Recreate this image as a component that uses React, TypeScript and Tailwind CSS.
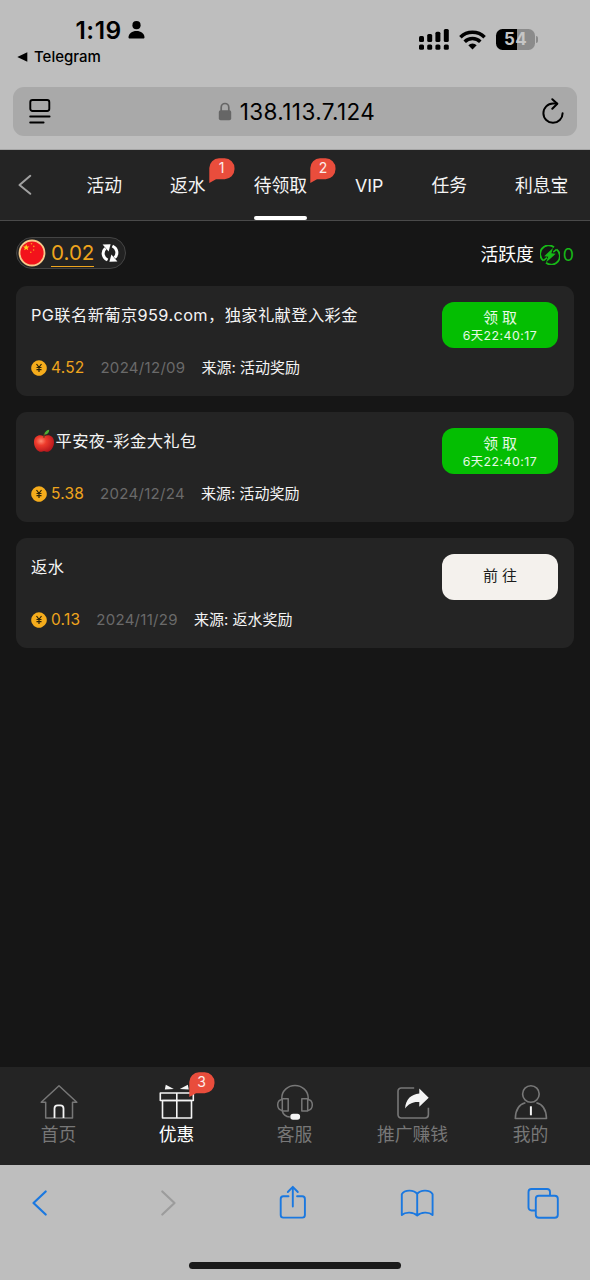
import React from 'react';

// Custom SVG Icons
const Icons = {
    Person: () => (
        <svg className="h-[18px] w-[17px]" viewBox="0 0 17 18" fill="currentColor">
            <circle cx="8.5" cy="4.2" r="4.1" />
            <path d="M0.5 16.2c0-3.6 3.6-6.2 8-6.2s8 2.6 8 6.2c0 .9-.5 1.3-1.3 1.3H1.8c-.8 0-1.3-.4-1.3-1.3z" />
        </svg>
    ),

    Signal: () => (
        <svg className="h-[21px] w-[30px]" viewBox="0 0 30 21" fill="currentColor">
            <rect x="0" y="7" width="5" height="6" rx="1.5" />
            <rect x="8.2" y="5" width="5" height="8" rx="1.5" />
            <rect x="16.4" y="2.8" width="5" height="10.2" rx="1.5" />
            <rect x="24.8" y="0" width="5" height="13" rx="1.5" />
            <rect x="0" y="15.5" width="5" height="5.3" rx="1.5" />
            <rect x="8.2" y="15.5" width="5" height="5.3" rx="1.5" />
            <rect x="16.4" y="15.5" width="5" height="5.3" rx="1.5" />
            <rect x="24.8" y="15.5" width="5" height="5.3" rx="1.5" />
        </svg>
    ),

    Wifi: () => (
        <svg className="h-[20px] w-[27px]" viewBox="0 0 27 20" fill="none" stroke="currentColor" strokeWidth={3.5}>
            <path d="M1.4 7.3a17.2 17.2 0 0124.2 0" />
            <path d="M5.7 11.8a11 11 0 0115.6 0" />
            <path d="M13.5 19.6L9.3 15.3a6 6 0 018.4 0z" fill="currentColor" stroke="none" />
        </svg>
    ),

    Reader: () => (
        <svg className="h-[27px] w-[22px]" viewBox="0 0 22 27" fill="none" stroke="currentColor" strokeWidth={1.9} strokeLinecap="round">
            <rect x="1.3" y="2" width="19" height="11" rx="2.2" />
            <path d="M1.2 18.5h19.4M1.2 24.5h13.4" />
        </svg>
    ),

    Lock: () => (
        <svg className="h-[19px] w-[14px]" viewBox="0 0 14 19">
            <path d="M3.2 9V5.4a3.8 3.9 0 017.6 0V9" fill="none" stroke="#666" strokeWidth={1.7} />
            <rect x="0.8" y="8.3" width="12.4" height="10" rx="1.8" fill="#666" />
        </svg>
    ),

    Reload: () => (
        <svg className="h-[27px] w-[22px]" viewBox="0 0 22 27" fill="none" stroke="currentColor" strokeWidth={2} strokeLinecap="round" strokeLinejoin="round">
            <path d="M20.6 15.2a9.6 9.6 0 11-9.6-9.6h3.8" />
            <path d="M10.3 1.2l5 4.6-5 5" />
        </svg>
    ),

    Back: () => (
        <svg className="h-[22px] w-[14px]" viewBox="0 0 14 22" fill="none" stroke="#a0a0a0" strokeWidth={2} strokeLinecap="round" strokeLinejoin="round">
            <path d="M12.3 1.8L1.5 11l10.8 8.8" />
        </svg>
    ),

    Flag: () => (
        <svg className="h-[28px] w-[28px]" viewBox="0 0 28 28">
            <circle cx="14" cy="14" r="12.5" fill="#f3121b" stroke="#f8c98a" strokeWidth={1.8} />
            <path d="M8.2 5.2l.9 2.2 2.3.1-1.8 1.5.6 2.3-2-1.3-2 1.3.6-2.3L5 7.5l2.3-.1z" fill="#ffd21c" />
            <g fill="#ff9a1c">
                <circle cx="13.5" cy="4.8" r=".8" />
                <circle cx="15.8" cy="7.4" r=".8" />
                <circle cx="15.6" cy="11" r=".8" />
                <circle cx="12.8" cy="13.3" r=".8" />
            </g>
        </svg>
    ),

    Refresh: () => (
        <svg className="h-[20px] w-[18px]" viewBox="0 0 18 20" fill="none" stroke="#fff" strokeWidth={3}>
            <path d="M6.6 17C1.8 14.8.6 9 4.4 5.2" />
            <path d="M11.4 3c4.8 2.2 6 8 2.2 11.8" />
            <path d="M1.6 1.6l8-.4-2 7.2z" fill="#fff" stroke="none" />
            <path d="M16.4 18.4l-8 .4 2-7.2z" fill="#fff" stroke="none" />
        </svg>
    ),

    Energy: () => (
        <svg className="h-[20px] w-[20px]" viewBox="0 0 20 20" fill="none" stroke="#17b817">
            <path d="M14 2.2A8.5 8.5 0 003.4 15.6M6 17.8A8.5 8.5 0 0016.6 4.4" strokeWidth={1.8} />
            <path d="M3.4 15.6l3.6-3M16.6 4.4l-3.4 2.8" strokeWidth={1.5} />
            <path d="M13 3L4.2 11.2l4 .6L6 17.4l9.8-8.6-4.400-.6z" fill="#17b817" stroke="none" />
        </svg>
    ),

    Coin: () => (
        <svg className="h-[16px] w-[16px]" viewBox="0 0 16 16">
            <path d="M5.2.7Q8-.3 10.8.7T15.3 5.2Q16.3 8 15.3 10.8T10.8 15.3Q8 16.3 5.2 15.3T.7 10.8Q-.3 8 .7 5.2T5.2.7z" fill="#f5ac1c" />
            <path d="M5.5 4L8 7.3 10.5 4M8 7.3v4.7M5.5 7.5h5M5.5 9.7h5" fill="none" stroke="#2b2209" strokeWidth={1.2} />
        </svg>
    ),

    Apple: () => (
        <svg className="h-[24px] w-[22px]" viewBox="0 0 22 24">
            <defs>
                <radialGradient id="apple" cx="0.35" cy="0.35" r="0.75">
                    <stop offset="0" stopColor="#ff8a70" />
                    <stop offset="0.35" stopColor="#ee3b2c" />
                    <stop offset="1" stopColor="#b0121a" />
                </radialGradient>
            </defs>
            <path d="M11 7.5C7 5 1 6.500 1 13.200C1 18.400 4.500 22.800 8 22.800C9.300 22.800 10 22.300 11 22.300C12 22.300 12.700 22.800 14 22.800C17.500 22.800 21 18.400 21 13.200C21 6.500 15 5 11 7.500Z" fill="url(#apple)" />
            <path d="M11 8.8C10.7 6.6 11.3 4.800 12.600 3.400" fill="none" stroke="#6d4420" strokeWidth={1.2} />
            <path d="M11.6 5.800C11.600 3 13.200 1.300 16.200.800 16.200 3.600 14.600 5.500 11.600 5.800z" fill="#4fae33" />
        </svg>
    ),

    Home: () => (
        <svg className="h-9 w-[38px]" viewBox="0 0 38 36" fill="none" stroke="#777" strokeWidth={1.5} strokeLinejoin="round">
            <path d="M1.2 18.3L19 1.8l17.8 16.5h-4.3V34H5.7V18.3z" />
            <path d="M14.5 34v-9.5a3.2 3.2 0 013.2-3.2h2.6a3.2 3.2 0 013.2 3.2V34" stroke="#f4f4f4" strokeWidth={1.8} />
        </svg>
    ),

    Gift: () => (
        <svg className="h-9 w-[38px]" viewBox="0 0 38 36" fill="none" stroke="#f4f4f4" strokeWidth={1.6} strokeLinejoin="round">
            <rect x="2.3" y="9" width="33" height="7.5" />
            <rect x="4.5" y="16.5" width="29" height="17.5" />
            <path d="M18.8 9v25" />
            <path d="M7.8.8l8 4.200-9 .4zM29.800.800l-8 4.200 9 .4z" fill="#f4f4f4" stroke="none" />
        </svg>
    ),

    Service: () => (
        <svg className="h-9 w-[38px]" viewBox="0 0 38 36" fill="none" stroke="#777" strokeWidth={1.5} strokeLinejoin="round">
            <path d="M5.8 15.5V14a13.2 12.5 0 0126.4 0v1.5" />
            <rect x="6.3" y="14.8" width="5.9" height="12.2" />
            <rect x="25.8" y="14.8" width="5.9" height="12.2" />
            <path d="M6.3 15.4c-3 .3-4.6 2.4-4.6 5.4s1.6 5.4 4.6 5.7M31.7 15.4c3 .3 4.6 2.4 4.6 5.4s-1.6 5.4-4.6 5.7" />
            <path d="M6.3 27c.8 3.6 3.2 5.6 7.6 6" />
            <rect x="14.3" y="29.8" width="9.8" height="6" rx="2.8" fill="#f4f4f4" stroke="none" />
        </svg>
    ),

    Promote: () => (
        <svg className="h-9 w-[38px]" viewBox="0 0 38 36" fill="none">
            <path d="M20.2 4H7.3A3.2 3.2 0 004 7.2v23.6A3.2 3.2 0 007.3 34h23.9a3.2 3.2 0 003.2-3.2v-7" stroke="#777" strokeWidth={1.6} />
            <path d="M25.3 4.5l9.4 9.3-9.4 9V18c-6.3-.6-10.6 1.7-14.2 6.4C11.6 15.4 17 10.3 25.3 9.5z" fill="#f4f4f4" />
        </svg>
    ),

    User: () => (
        <svg className="h-9 w-[38px]" viewBox="0 0 38 36" fill="none" stroke="#777" strokeWidth={1.6} strokeLinejoin="round">
            <circle cx="18.9" cy="10" r="8.3" />
            <path d="M13.4 18.7C7.4 20.3 3.5 26 3.3 34.5h31.2C34.3 26 30.4 20.3 24.4 18.7" />
            <path d="M18.9 22.3v9" stroke="#f4f4f4" strokeWidth={2} />
        </svg>
    ),
};

const Badge: React.FC<{ count: number; className: string }> = ({ count, className }) => (
    <span className={`absolute h-[25px] w-[26px] ${className}`}>
        <svg className="absolute inset-0 h-[25px] w-[26px]" viewBox="0 0 26 25" fill="#e94d3c">
            <path d="M10 .3h5.5A9.8 9.8 0 0125.5 10.3v1a9.8 9.8 0 01-10 9.900H7L.3 25V10A9.700 9.700 0 0110 .3z" />
        </svg>
        <span className="absolute inset-x-0 top-0 text-center text-[14px] leading-[20px] text-white/90">{count}</span>
    </span>
);

const tabs = [
    { label: '活动' },
    { label: '返水', badge: 1 },
    { label: '待领取', badge: 2, active: true },
    { label: 'VIP' },
    { label: '任务' },
    { label: '利息宝' },
];

interface Reward {
    title: string;
    apple?: boolean;
    amount: string;
    date: string;
    source: string;
    countdown?: string;
}

const rewards: Reward[] = [
    { title: 'PG联名新葡京959.com，独家礼献登入彩金', amount: '4.52', date: '2024/12/09', source: '活动奖励', countdown: '6天22:40:17' },
    { title: '平安夜-彩金大礼包', apple: true, amount: '5.38', date: '2024/12/24', source: '活动奖励', countdown: '6天22:40:17' },
    { title: '返水', amount: '0.13', date: '2024/11/29', source: '返水奖励' },
];

const navItems = [
    { label: '首页', icon: <Icons.Home /> },
    { label: '优惠', icon: <Icons.Gift />, badge: 3, active: true },
    { label: '客服', icon: <Icons.Service /> },
    { label: '推广赚钱', icon: <Icons.Promote /> },
    { label: '我的', icon: <Icons.User /> },
];

const StatusBar = () => (
    <div className="flex h-[87px] justify-between text-black">
        <div className="pt-[16px]">
            <div className="flex items-center gap-[6px] pl-[75.5px]">
                <span className="text-[24.5px] leading-[28px] font-semibold tracking-[0.5px]">1:19</span>
                <Icons.Person />
            </div>
            <div className="mt-[2px] flex items-center gap-[6px] pl-[17px]">
                <svg className="h-[10px] w-[11px]" viewBox="0 0 11 10" fill="currentColor">
                    <path d="M.3 5L10.3.2v9.6z" />
                </svg>
                <span className="text-[15px] leading-[22px] font-medium">Telegram</span>
            </div>
        </div>
        <div className="mt-[29px] flex h-[21px] items-center pr-[52px]">
            <Icons.Signal />
            <div className="ml-[10px]"><Icons.Wifi /></div>
            <div className="ml-[10px] flex h-[21px] w-[39px] items-center justify-center rounded-[6.5px] bg-[linear-gradient(90deg,#000_54%,#8b8b8b_54%)]">
                <span className="text-[17px] leading-[21px] font-bold tracking-[0.3px] text-[#c6c6c6]">54</span>
            </div>
            <div className="ml-[1px] h-[7px] w-[2px] rounded-r-full bg-[#8b8b8b]" />
        </div>
    </div>
);

const AddressBar = () => (
    <div className="mx-[13px] flex h-[49px] items-center justify-between rounded-[11px] bg-[#a9a9a9] pr-[13px] pl-[16px] text-black">
        <Icons.Reader />
        <div className="flex items-center gap-[8px]">
            <Icons.Lock />
            <span className="text-[22.5px] leading-[30px] tracking-[0.4px]">138.113.7.124</span>
        </div>
        <Icons.Reload />
    </div>
);

const RewardCard: React.FC<{ reward: Reward }> = ({ reward }) => (
    <div className="flex h-[110px] justify-between rounded-[11px] bg-[#242424] pt-4 pr-4 pl-[15px]">
        <div>
            <div className="flex h-[26px] items-center text-[16.3px] tracking-[0.38px] text-[#f4f4f4]">
                {reward.apple && <span className="mr-[1px] ml-[1.5px]"><Icons.Apple /></span>}
                <span>{reward.title}</span>
            </div>
            <div className="mt-[28px] flex h-[24px] items-center text-[15px]">
                <Icons.Coin />
                <span className="ml-[4px] text-[15.5px] tracking-[0.2px] text-[#efa51d]">{reward.amount}</span>
                <span className="ml-4 tracking-[0.3px] text-[#6a6a6a]">{reward.date}</span>
                <span className="ml-4 text-[#f4f4f4]">来源: {reward.source}</span>
            </div>
        </div>
        {reward.countdown ? (
            <button className="flex h-[46px] w-[116px] flex-col items-center rounded-[12px] bg-[#04be02] pt-[6px] text-white/90">
                <span className="text-[15px] leading-[19px]">领 取</span>
                <span className="text-[12.3px] leading-[17px] tracking-[0.5px]">{reward.countdown}</span>
            </button>
        ) : (
            <button className="h-[46px] w-[116px] rounded-[12px] bg-[#f4f1ed] pb-[2px] text-[15px] text-[#1c1c1c]">前 往</button>
        )}
    </div>
);

const App: React.FC = () => {
    return (
        <div className="flex h-[1280px] w-[590px] flex-col overflow-hidden bg-[#161616] font-['Inter','Noto_Sans_CJK_SC',sans-serif]">
            <header className="h-[150px] shrink-0 border-b border-[#a5a5a5] bg-[#bebebe]">
                <StatusBar />
                <AddressBar />
            </header>

            <nav className="flex h-[71px] shrink-0 items-center border-b border-[#4a4a4a] bg-[#242424] pl-[18px]">
                <Icons.Back />
                <div className="ml-[54.5px] flex h-full gap-[48px] text-[17.8px] whitespace-nowrap text-[#f4f4f4]">
                    {tabs.map((tab) => (
                        <div key={tab.label} className="relative flex h-full items-center pt-[2px]">
                            {tab.label}
                            {tab.badge && <Badge count={tab.badge} className="top-[8px] left-[calc(100%+3px)]" />}
                            {tab.active && <span className="absolute inset-x-0 bottom-0 h-[4px] rounded-full bg-white" />}
                        </div>
                    ))}
                </div>
            </nav>

            <main className="flex-1 px-4 pt-4">
                <div className="flex h-[32px] items-center justify-between">
                    <div className="flex h-[32px] w-[110px] items-center rounded-full border border-[#444] bg-[#222] pl-[1px]">
                        <Icons.Flag />
                        <span className="ml-[5px] h-[28px] w-[43px] border-b-[1.5px] border-[#efa51d] text-center text-[20.6px] leading-[28px] text-[#efa51d]">0.02</span>
                        <span className="ml-[7px]"><Icons.Refresh /></span>
                    </div>
                    <div className="flex items-center pt-[4px] text-[17.8px] text-white">
                        <span>活跃度</span>
                        <span className="ml-[6px]"><Icons.Energy /></span>
                        <span className="ml-[3px] text-[#17b817]">0</span>
                    </div>
                </div>
                <div className="mt-[17px] flex flex-col gap-4">
                    {rewards.map((reward, index) => (
                        <RewardCard key={index} reward={reward} />
                    ))}
                </div>
            </main>

            <nav className="grid h-[98px] shrink-0 grid-cols-5 bg-[#242424]">
                {navItems.map((item) => (
                    <div key={item.label} className={`relative flex flex-col items-center pt-[17px] text-[17.8px] leading-[30px] ${item.active ? 'text-white' : 'text-[#777]'}`}>
                        {item.icon}
                        <span className="pr-[1px]">{item.label}</span>
                        {item.badge && <Badge count={item.badge} className="top-[5px] left-[70.5px]" />}
                    </div>
                ))}
            </nav>

            <footer className="flex h-[115px] shrink-0 flex-col items-center bg-[#bebebe]">
                <div className="flex h-[76px] w-full items-center justify-between pr-[30px] pl-[23px] text-[#1a78e0]">
                    <svg className="h-9 w-[34px]" viewBox="0 0 34 36" fill="none" stroke="currentColor" strokeWidth={2.2} strokeLinecap="round" strokeLinejoin="round">
                        <path d="M22.7 6.5L10.5 18l12.2 11.5" />
                    </svg>
                    <svg className="h-9 w-[34px]" viewBox="0 0 34 36" fill="none" stroke="#9c9c9c" strokeWidth={2.2} strokeLinecap="round" strokeLinejoin="round">
                        <path d="M13.3 6.5L25.5 18 13.3 29.5" />
                    </svg>
                    <svg className="h-9 w-[34px]" viewBox="0 0 34 36" fill="none" stroke="currentColor" strokeWidth={1.9} strokeLinecap="round" strokeLinejoin="round">
                        <path d="M13.5 11.3H8.3a2.6 2.6 0 00-2.6 2.6V30a2.6 2.6 0 002.6 2.6h19a2.6 2.6 0 002.6-2.6V13.9a2.6 2.6 0 00-2.6-2.6h-5.2M17.8 21.5V2M12.8 7l5-5.2 5 5.2" />
                    </svg>
                    <svg className="h-9 w-[34px]" viewBox="0 0 34 36" fill="none" stroke="currentColor" strokeWidth={1.9} strokeLinejoin="round">
                        <path d="M17.2 30.5C13.5 27 5.5 26.5 1.8 30V9.3C4.5 4.5 14 4.5 17.2 9c3.2-4.5 12.7-4.5 15.4.3V30c-3.7-3.5-11.7-3-15.4.5zM17.2 9v21.5" />
                    </svg>
                    <svg className="h-9 w-[34px]" viewBox="0 0 34 36" fill="none" stroke="currentColor" strokeWidth={1.9}>
                        <path d="M9.7 25.5H5.5a3 3 0 01-3-3V7a3 3 0 013-3H21a3 3 0 013 3v3.5" />
                        <rect x="9.8" y="10.7" width="22" height="22" rx="3" />
                    </svg>
                </div>
                <div className="mt-[21px] h-[7px] w-[212px] rounded-full bg-[#1a1a1a]" />
            </footer>
        </div>
    );
};

export default App;
